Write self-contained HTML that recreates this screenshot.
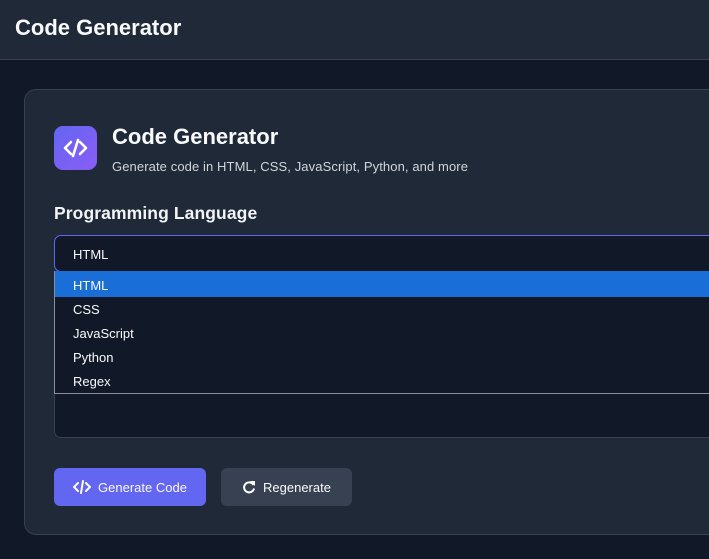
<!DOCTYPE html>
<html><head><style>
*{box-sizing:border-box;margin:0;padding:0}
body{width:709px;height:559px;overflow:hidden;background:#111827;font-family:"Liberation Sans",Arial,sans-serif;color:#f9fafb;position:relative}
.hdr{position:absolute;left:0;top:0;width:709px;height:60px;background:#1f2937;border-bottom:1px solid #374151}
.hdr h1{position:absolute;left:15px;top:15px;font-size:22px;font-weight:bold}
.card{position:absolute;left:24px;top:89px;width:720px;height:446px;background:#1f2937;border:1px solid #374151;border-radius:12px}
.ic{position:absolute;left:54px;top:126px;width:43px;height:44px;border-radius:9px;background:linear-gradient(135deg,#6366f1,#8b5cf6)}
.t{position:absolute;left:112px;top:124px;font-size:22px;font-weight:bold}
.s{position:absolute;left:112px;top:159px;font-size:13px;color:#d1d5db;letter-spacing:0.1px}
.l{position:absolute;left:54px;top:203px;font-size:17.5px;font-weight:bold;color:#f3f4f6;letter-spacing:0.1px}
.sel{position:absolute;left:54px;top:235px;width:680px;height:37px;border:1px solid #6366f1;border-radius:7px;background:#111827;font-size:13px;padding:11px 0 0 18px}
.ta{position:absolute;left:54px;top:270px;width:680px;height:168px;border:1px solid #374151;border-radius:7px;background:#111827}
.dd{position:absolute;left:54px;top:271px;width:680px;height:123px;background:#111827;border:1px solid #8a8f98;border-top:none}
.dd div{height:24px;font-size:13px;padding:5px 0 0 18px}
.dd .a{background:#1a6ed8;height:26px;padding-top:7px}
.b{position:absolute;top:468px;height:38px;border-radius:6px;font-size:13px;display:flex;align-items:center;justify-content:center;gap:7px}
</style></head><body>
<div class="hdr"><h1>Code Generator</h1></div>
<div class="card"></div>
<div class="ic"><svg width="43" height="44" viewBox="0 0 43 44"><path d="M17 16l-6 6 6 6M26 16l6 6-6 6M24 14l-5 16" stroke="#fff" stroke-width="2.6" fill="none" stroke-linecap="round" stroke-linejoin="round"/></svg></div>
<div class="t">Code Generator</div>
<div class="s">Generate code in HTML, CSS, JavaScript, Python, and more</div>
<div class="l">Programming Language</div>
<div class="ta"></div>
<div class="sel">HTML</div>
<div class="dd"><div class="a">HTML</div><div>CSS</div><div>JavaScript</div><div>Python</div><div>Regex</div></div>
<div class="b" style="left:54px;width:152px;background:#6366f1"><svg width="18" height="14" viewBox="0 0 18 14"><path d="M5 3L1 7l4 4M13 3l4 4-4 4M10 1L8 13" stroke="#fff" stroke-width="2" fill="none" stroke-linecap="round"/></svg>Generate Code</div>
<div class="b" style="left:221px;width:131px;background:#374151"><svg width="14" height="14" viewBox="0 0 14 14"><path d="M11.5 5A5 5 0 1 0 12 8.5" stroke="#fff" stroke-width="2" fill="none"/><path d="M8 1h5v5z" fill="#fff"/></svg>Regenerate</div>
</body></html>
